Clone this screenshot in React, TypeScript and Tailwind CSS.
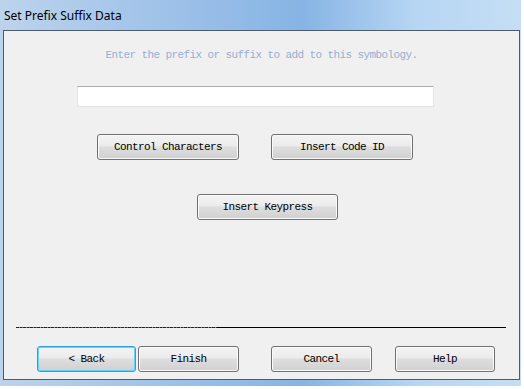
import React from 'react'

const mono = 'font-["Liberation_Mono","DejaVu_Sans_Mono",monospace]'

function WinButton({ label, width, focused = false }: { label: string; width: string; focused?: boolean }) {
  const border = focused
    ? 'border-[#2f9fd6] shadow-[inset_0_0_0_1px_#62d6fa]'
    : 'border-[#707070] shadow-[inset_0_0_0_1px_#fbfbfb]'
  return (
    <button
      className={`${width} h-[26px] shrink-0 rounded-[3px] border ${border} bg-[linear-gradient(#f3f3f3_0%,#ececec_45%,#dedede_50%,#d0d0d0_100%)] text-[11px] tracking-[-0.6px] text-black pt-[1px] ${mono} flex items-center justify-center`}
    >
      {label}
    </button>
  )
}

export default function App() {
  return (
    <div className="w-[524px] h-[389px] bg-white">
      <div className="w-[521px] h-[386px] flex flex-col bg-[linear-gradient(90deg,#bcd3ec_0%,#9cc0e8_35%,#86b4e4_58%,#b7d6f3_80%,#c4def5_100%)]">
        {/* Title bar */}
        <div className="h-[30px] shrink-0 flex items-center pl-[4px] pt-[1px] text-[12px] text-black font-['Noto_Sans','Liberation_Sans',sans-serif]">
          Set Prefix Suffix Data
        </div>

        {/* Client area */}
        <div className="w-[517px] h-[350px] ml-[3px] border border-[#4d5b6f] bg-[#f0f0f0] flex flex-col">
          <div className={`mt-[18px] text-center text-[11px] tracking-[-0.6px] leading-[13px] text-[#98aed0] ${mono}`}>
            Enter the prefix or suffix to add to this symbology.
          </div>

          <div className="mt-[24px] ml-[73px] w-[357px] h-[21px] bg-white border border-[#e3e3ea] border-t-[#ababab]" />

          <div className="mt-[27px] flex">
            <div className="ml-[93px]">
              <WinButton label="Control Characters" width="w-[142px]" />
            </div>
            <div className="ml-[32px]">
              <WinButton label="Insert Code ID" width="w-[142px]" />
            </div>
          </div>

          <div className="mt-[34px] ml-[193px]">
            <WinButton label="Insert Keypress" width="w-[141px]" />
          </div>

          {/* Separator */}
          <div className="mt-[107px] ml-[12px] w-[490px] h-[1px] flex">
            <div className="w-[201px] h-[1px] bg-[repeating-linear-gradient(90deg,#222_0px,#222_3px,#c8862c_3px,#c8862c_4px,#222_4px,#222_6px,#3b7fc4_6px,#3b7fc4_7px)]" />
            <div className="flex-1 h-[1px] bg-black" />
          </div>

          {/* Bottom buttons */}
          <div className="mt-[18px] flex">
            <div className="ml-[33px]">
              <WinButton label="< Back" width="w-[99px]" focused />
            </div>
            <div className="ml-[2px]">
              <WinButton label="Finish" width="w-[101px]" />
            </div>
            <div className="ml-[32px]">
              <WinButton label="Cancel" width="w-[101px]" />
            </div>
            <div className="ml-[23px]">
              <WinButton label="Help" width="w-[100px]" />
            </div>
          </div>
        </div>
      </div>
    </div>
  )
}
